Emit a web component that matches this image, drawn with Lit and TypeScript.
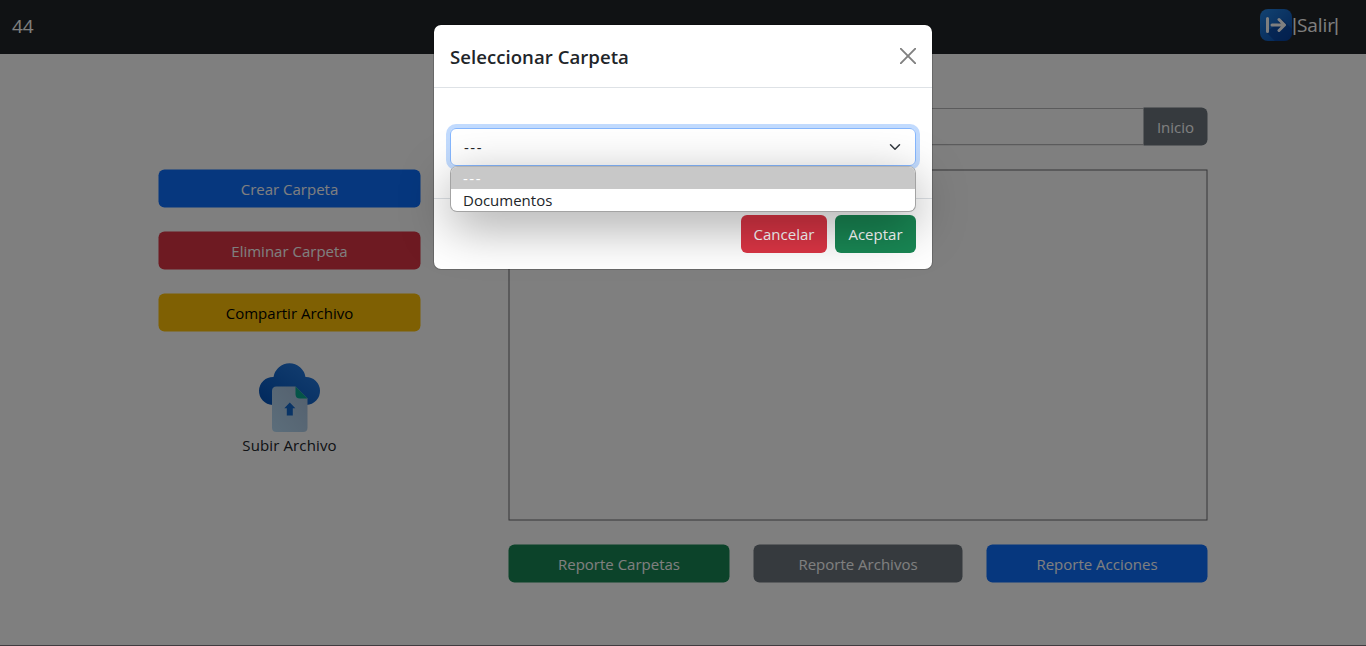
import { LitElement, html, css } from "lit";
import { customElement } from "lit/decorators.js";

@customElement("app-root")
export class AppRoot extends LitElement {
  static styles = css`
    :host {
      display: block;
      position: relative;
      width: 1366px;
      height: 646px;
      overflow: hidden;
      background: #fff;
      color: #212529;
      font: 400 15px/24px "Open Sans", "Noto Sans", sans-serif;
      letter-spacing: 0;
    }
    * { box-sizing: border-box; }
    .page { display: flex; flex-direction: column; height: 646px; border-bottom: 1px solid #807880; }
    .nav {
      height: 54px;
      flex: none;
      display: flex;
      align-items: center;
      justify-content: space-between;
      padding: 0 27px 4px 12px;
      background: #212529;
      color: #fff;
      font-size: 19px;
    }
    .brand { padding-top: 1px; }
    .exit { display: flex; align-items: center; height: 50px; }
    .bar { width: 5px; text-align: center; font-family: "Liberation Sans", Arial, sans-serif; }
    .label { width: 37px; letter-spacing: -0.1px; text-align: center; }
    .main {
      display: grid;
      grid-template-columns: 262px 699px;
      column-gap: 88px;
      padding: 53px 0 0 158px;
      transform: translate(0.5px, 0.5px);
    }
    .side { display: flex; flex-direction: column; gap: 24px; padding-top: 62px; }
    .btn {
      font: inherit;
      letter-spacing: inherit;
      height: 38px;
      border: 0;
      border-radius: 6px;
      padding: 0 0 1px;
      color: #fff;
      text-align: center;
    }
    .primary { background: #0d6efd; }
    .danger { background: #dc3545; }
    .warning { background: #ffc107; color: #000; }
    .success { background: #198754; }
    .secondary { background: #6c757d; }
    .upload { display: flex; flex-direction: column; align-items: center; padding-top: 6px; letter-spacing: 0.12px; }
    .work { display: flex; flex-direction: column; gap: 24px; }
    .path { display: flex; height: 38px; }
    .path-field { flex: 1; border: 1px solid #6c6c70; border-right: 0; border-radius: 6px 0 0 6px; }
    .path .btn { width: 64px; border-radius: 0 6px 6px 0; }
    .files { height: 351px; border: 1px solid #6c6c70; }
    .reports { display: grid; grid-template-columns: 221px 209px 221px; gap: 24px; }

    .backdrop {
      position: absolute;
      inset: 0;
      background: rgba(0, 0, 0, 0.5);
      display: flex;
      justify-content: center;
      align-items: flex-start;
      padding-top: 24px;
    }
    .modal {
      width: 500px;
      height: 246px;
      display: flex;
      flex-direction: column;
      background: #fff;
      background-clip: padding-box;
      border: 1px solid rgba(0, 0, 0, 0.175);
      border-radius: 8px;
    }
    .head {
      height: 63px;
      display: flex;
      align-items: center;
      justify-content: space-between;
      padding: 0 16px;
      border-bottom: 1px solid #dee2e6;
    }
    .title { font-size: 18.6px; font-weight: 600; letter-spacing: 0.03px; padding-top: 2px; }
    .body { height: 110px; padding: 40px 16px 0; position: relative; }
    .select {
      height: 38px;
      display: flex;
      align-items: center;
      justify-content: space-between;
      padding: 0 12px 0 13px;
      border: 1px solid #86b7fe;
      border-radius: 6px;
      box-shadow: 0 0 0 4px #c2dbfe;
    }
    .dash { letter-spacing: 1.5px; }
    .list {
      position: absolute;
      top: 78px;
      left: 16px;
      width: 466px;
      height: 46px;
      z-index: 2;
      background: #fff;
      border: 1px solid #a3a3a3;
      border-top-color: #b4b4b4;
      border-radius: 7px;
      overflow: hidden;
      box-shadow: 0 14px 50px rgba(0, 0, 0, 0.36);
    }
    .option { height: 22px; line-height: 22px; padding-left: 12px; color: #212529; }
    .chosen { background: #c8c8c8; color: #fff; }
    .foot {
      flex: 1;
      display: flex;
      justify-content: flex-end;
      gap: 8px;
      padding: 16px;
      border-top: 1px solid #dee2e6;
    }
    .cancel { width: 86px; }
    .accept { width: 81px; }
  `;

  render() {
    return html`
      <div class="page">
        <div class="nav">
          <span class="brand">44</span>
          <span class="exit">
            <svg width="32" height="32" viewBox="0 0 32 32">
              <defs>
                <linearGradient id="ex" x1="0" y1="0" x2="1" y2="1">
                  <stop offset="0" stop-color="#2586e4" /><stop offset="1" stop-color="#0747a8" />
                </linearGradient>
              </defs>
              <rect width="32" height="32" rx="8" fill="url(#ex)" />
              <path d="M6 23L15 32H24Q32 32 32 24V20L22 10L16 16Z" fill="#053b94" opacity=".55" />
              <path d="M7.500 9.500V22.500M12 16H24M19 10.500L24.500 16L19 21.500" fill="none" stroke="#fff" stroke-width="3" stroke-linecap="round" stroke-linejoin="round" />
            </svg>
            <span class="bar">|</span><span class="label">Salir</span><span class="bar">|</span>
          </span>
        </div>
        <div class="main">
          <div class="side">
            <button class="btn primary">Crear Carpeta</button>
            <button class="btn danger">Eliminar Carpeta</button>
            <button class="btn warning">Compartir Archivo</button>
            <div class="upload">
              <svg width="62" height="71" viewBox="0 0 62 71">
                <defs>
                  <linearGradient id="cl" x1="0" y1="1" x2="1" y2="0">
                    <stop offset="0" stop-color="#0050b8" /><stop offset="1" stop-color="#2a80e4" />
                  </linearGradient>
                  <linearGradient id="pp" x1="0" y1="1" x2="1" y2="0">
                    <stop offset="0" stop-color="#b8dcf6" /><stop offset="1" stop-color="#a8c0dc" />
                  </linearGradient>
                </defs>
                <path d="M14 43.500A14 14 0 0 1 15 15.500A16.200 16.200 0 0 1 47 15.500A14 14 0 0 1 48 43.500Z" fill="url(#cl)" />
                <path d="M18 25H37L49 37V66Q49 70.500 44.500 70.500H18Q13.500 70.500 13.500 66V29.500Q13.500 25 18 25Z" fill="url(#pp)" />
                <path d="M37 25L49 37H41.500Q37 37 37 32.500Z" fill="#08a890" />
                <path d="M31.300 41L36.800 46.800H34.300V54H28.300V46.800H25.800Z" fill="#1268cc" />
              </svg>
              <span>Subir Archivo</span>
            </div>
          </div>
          <div class="work">
            <div class="path">
              <div class="path-field"></div>
              <button class="btn secondary">Inicio</button>
            </div>
            <div class="files"></div>
            <div class="reports">
              <button class="btn success">Reporte Carpetas</button>
              <button class="btn secondary">Reporte Archivos</button>
              <button class="btn primary">Reporte Acciones</button>
            </div>
          </div>
        </div>
      </div>
      <div class="backdrop">
        <div class="modal">
          <div class="head">
            <span class="title">Seleccionar Carpeta</span>
            <svg width="16" height="16" viewBox="0 0 16 16">
              <path d="M.7 .7L15.300 15.300M15.300 .7L.7 15.300" stroke="#808080" stroke-width="1.900" stroke-linecap="round" />
            </svg>
          </div>
          <div class="body">
            <div class="select">
              <span class="dash">---</span>
              <svg width="16" height="12" viewBox="0 0 16 16">
                <path d="M2 5L8 11L14 5" fill="none" stroke="#343a40" stroke-width="2" stroke-linecap="round" stroke-linejoin="round" />
              </svg>
            </div>
            <div class="list">
              <div class="option chosen dash">---</div>
              <div class="option">Documentos</div>
            </div>
          </div>
          <div class="foot">
            <button class="btn danger cancel">Cancelar</button>
            <button class="btn success accept">Aceptar</button>
          </div>
        </div>
      </div>
    `;
  }
}
